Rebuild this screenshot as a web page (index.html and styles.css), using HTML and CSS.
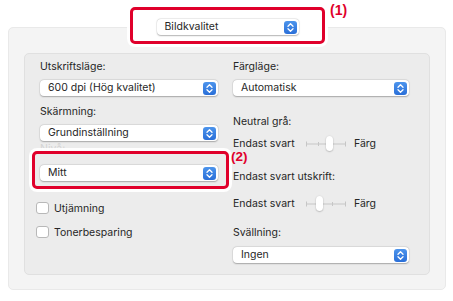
FILE: index.html
```html
<!DOCTYPE html>
<html lang="sv">
<head>
    <meta charset="UTF-8">
    <meta name="viewport" content="width=device-width, initial-scale=1.0">
    <title>Bildkvalitet</title>
    <link rel="stylesheet" href="styles.css">
</head>
<body>
    <div class="top">
        <div class="callout callout-top">
            <div class="popup popup-head">
                <span>Bildkvalitet</span>
                <span class="stepper"><svg viewBox="0 0 13 13"><path d="M4 5.2 6.5 2.8 9 5.2M4 7.8 6.5 10.2 9 7.8"/></svg></span>
            </div>
            <span class="tag">(1)</span>
        </div>
    </div>

    <div class="outer">
        <div class="inner">
            <div class="col">
                <div class="label">Utskriftsläge:</div>
                <div class="popup">
                    <span>600 dpi (Hög kvalitet)</span>
                    <span class="stepper"><svg viewBox="0 0 13 13"><path d="M4 5.2 6.5 2.8 9 5.2M4 7.8 6.5 10.2 9 7.8"/></svg></span>
                </div>
                <div class="label gap">Skärmning:</div>
                <div class="popup">
                    <span>Grundinställning</span>
                    <span class="stepper"><svg viewBox="0 0 13 13"><path d="M4 5.2 6.5 2.8 9 5.2M4 7.8 6.5 10.2 9 7.8"/></svg></span>
                </div>
                <div class="label faded">Nivå:</div>
                <div class="callout callout-mid">
                    <div class="popup">
                        <span>Mitt</span>
                        <span class="stepper"><svg viewBox="0 0 13 13"><path d="M4 5.2 6.5 2.8 9 5.2M4 7.8 6.5 10.2 9 7.8"/></svg></span>
                    </div>
                    <span class="tag">(2)</span>
                </div>
                <div class="check first"><span class="box"></span>Utjämning</div>
                <div class="check"><span class="box"></span>Tonerbesparing</div>
            </div>

            <div class="col">
                <div class="label">Färgläge:</div>
                <div class="popup">
                    <span>Automatisk</span>
                    <span class="stepper"><svg viewBox="0 0 13 13"><path d="M4 5.2 6.5 2.8 9 5.2M4 7.8 6.5 10.2 9 7.8"/></svg></span>
                </div>
                <div class="label neutral">Neutral grå:</div>
                <div class="slider-row">
                    <span class="end">Endast svart</span>
                    <span class="slider">
                        <svg viewBox="0 0 40 16"><path d="M0.5 5.5v5M0.5 8h39M12.5 6v4M26.5 6v4M39.5 5.5v5"/></svg>
                        <span class="thumb" style="left: 20px"></span>
                    </span>
                    <span>Färg</span>
                </div>
                <div class="label bw">Endast svart utskrift:</div>
                <div class="slider-row second">
                    <span class="end">Endast svart</span>
                    <span class="slider">
                        <svg viewBox="0 0 40 16"><path d="M0.5 5.5v5M0.5 8h39M12.5 6v4M26.5 6v4M39.5 5.5v5"/></svg>
                        <span class="thumb" style="left: 10px"></span>
                    </span>
                    <span>Färg</span>
                </div>
                <div class="label swell">Svällning:</div>
                <div class="popup">
                    <span>Ingen</span>
                    <span class="stepper"><svg viewBox="0 0 13 13"><path d="M4 5.2 6.5 2.8 9 5.2M4 7.8 6.5 10.2 9 7.8"/></svg></span>
                </div>
            </div>
        </div>
    </div>
</body>
</html>
```

FILE: styles.css
```css
body {
    margin: 0;
    background-color: #fff;
    font-family: Inter, "Noto Sans", sans-serif;
    font-size: 10.5px;
    color: #262626;
}
.top {
    display: flex;
    justify-content: center;
    padding: 7px 0 0 2px;
    position: relative;
    z-index: 2;
}
.callout {
    position: relative;
    border: 3px solid #e0002b;
    border-radius: 5px;
    box-shadow: 0 0 0 3px rgba(255, 255, 255, 0.92);
}
.callout-top {
    width: 189px;
    padding: 9px 0 6px;
    background-color: #fff;
    display: flex;
    justify-content: center;
}
.tag {
    position: absolute;
    color: #e0002b;
    font-family: "Liberation Sans", Arial, sans-serif;
    font-weight: bold;
    font-size: 14px;
    line-height: 10px;
}
.callout-top .tag {
    left: calc(100% + 8px);
    top: -5px;
}
.outer {
    margin: -17px 7px 0 8px;
    height: 236px;
    padding: 25px 15px 0 16px;
    background-color: #f4f4f4;
    border: 1px solid #e9e9e9;
    border-radius: 5px;
    position: relative;
    z-index: 1;
}
.inner {
    display: flex;
    gap: 15px;
    height: 214px;
    padding: 6px 20px 0 15px;
    background-color: #ececec;
    border: 1px solid #e0e0e0;
    border-radius: 5px;
    margin-left: -1px;
}
.col {
    width: 178px;
    display: flex;
    flex-direction: column;
}
.col + .col {
    width: 179px;
}
.label {
    height: 14px;
    line-height: 14px;
    margin-bottom: 6px;
}
.label.gap {
    margin-top: 9px;
}
.label.faded {
    margin: 1px 0 0;
    color: #d4d4d4;
}
.popup {
    height: 16px;
    display: flex;
    align-items: center;
    justify-content: space-between;
    padding: 0 2px 0 8px;
    background-color: #fff;
    border-radius: 4px;
    box-shadow: 0 0.5px 1.5px rgba(0, 0, 0, 0.28), 0 0 0 0.5px rgba(0, 0, 0, 0.06);
    line-height: 16px;
}
.popup-head {
    width: 132px;
}
.stepper {
    width: 13px;
    height: 13px;
    border-radius: 3px;
    background: linear-gradient(#4c94ec, #2a6fd8);
    display: flex;
}
.stepper svg {
    width: 13px;
    height: 13px;
    fill: none;
    stroke: #fff;
    stroke-width: 1.3;
    stroke-linecap: round;
    stroke-linejoin: round;
}
.callout-mid {
    margin: -5px 0 0 -8px;
    width: 178px;
    padding: 11px 8px 5px 5px;
    background-color: #ececec;
}
.callout-mid .tag {
    left: calc(100% + 5px);
    top: -2px;
    font-size: 13.5px;
}
.check {
    display: flex;
    align-items: center;
    gap: 5px;
    height: 14px;
    margin: 10px 0 0 -4px;
}
.check.first {
    margin-top: 12px;
}
.box {
    width: 11px;
    height: 10px;
    background-color: #fff;
    border: 0.5px solid #b8b8b8;
    border-radius: 3px;
}
.label.neutral {
    margin: 19px 0 7px;
}
.slider-row {
    display: flex;
    align-items: center;
    height: 16px;
    line-height: 12px;
}
.slider-row .end {
    width: 73px;
}
.slider {
    position: relative;
    width: 40px;
    height: 16px;
    margin-right: 8px;
}
.slider svg {
    width: 40px;
    height: 16px;
    fill: none;
    stroke: #c6c6c6;
    stroke-width: 1;
}
.thumb {
    position: absolute;
    top: 0;
    width: 7px;
    height: 15px;
    background-color: #fff;
    border-radius: 4px;
    box-shadow: 0 0.5px 1.5px rgba(0, 0, 0, 0.35);
}
.label.bw {
    margin: 18px 0 12px;
}
.label.swell {
    margin: 14px 0 7px;
}
```
